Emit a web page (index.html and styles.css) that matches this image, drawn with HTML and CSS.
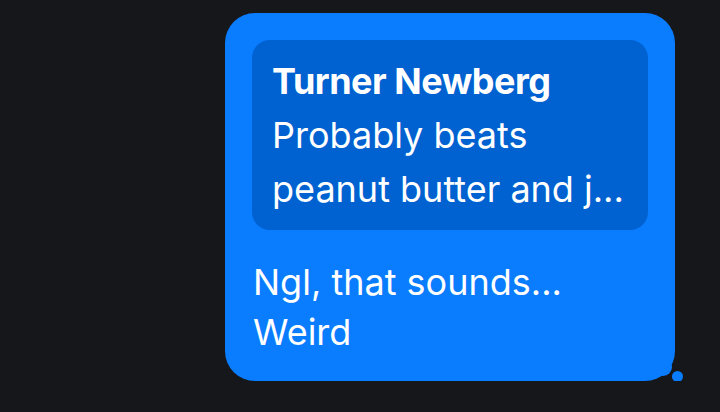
FILE: index.html
```html
<!DOCTYPE html>
<html lang="en">
<head>
    <meta charset="UTF-8">
    <meta name="viewport" content="width=device-width, initial-scale=1.0">
    <title>Message</title>
    <link rel="stylesheet" href="styles.css">
</head>
<body>
    <div class="thread">
        <div class="bubble">
            <div class="reply">
                <div class="reply-name">Turner Newberg</div>
                <div class="reply-text">Probably beats peanut butter and j...</div>
            </div>
            <div class="text">Ngl, that sounds...<br>Weird</div>
            <span class="tail-big"></span>
            <span class="tail-small"></span>
        </div>
    </div>
</body>
</html>
```

FILE: styles.css
```css
body {
    margin: 0;
    background-color: #16171b;
    font-family: Inter, "Noto Sans", sans-serif;
    color: white;
}

.thread {
    display: flex;
    justify-content: flex-end;
    padding: 13px 45px 0 0;
}

.bubble {
    position: relative;
    width: 450px;
    box-sizing: border-box;
    padding: 27px 27px 24px 27px;
    background-color: #0a7cfe;
    border-radius: 30px;
}

.reply {
    background-color: #0062d0;
    border-radius: 18px;
    padding: 14px 20px 14px 20px;
}

.reply-name {
    font-weight: 700;
    font-size: 36px;
    line-height: 54px;
    letter-spacing: -0.5px;
}

.reply-text {
    font-size: 36px;
    line-height: 54px;
}

.text {
    margin-top: 27px;
    padding-left: 1px;
    font-size: 36px;
    line-height: 50px;
}

.tail-big {
    position: absolute;
    right: 3px;
    bottom: 5px;
    width: 18px;
    height: 18px;
    border-radius: 50%;
    background-color: #0a7cfe;
}

.tail-small {
    position: absolute;
    right: -8px;
    bottom: -1px;
    width: 11px;
    height: 11px;
    border-radius: 50%;
    background-color: #0a7cfe;
}
```
